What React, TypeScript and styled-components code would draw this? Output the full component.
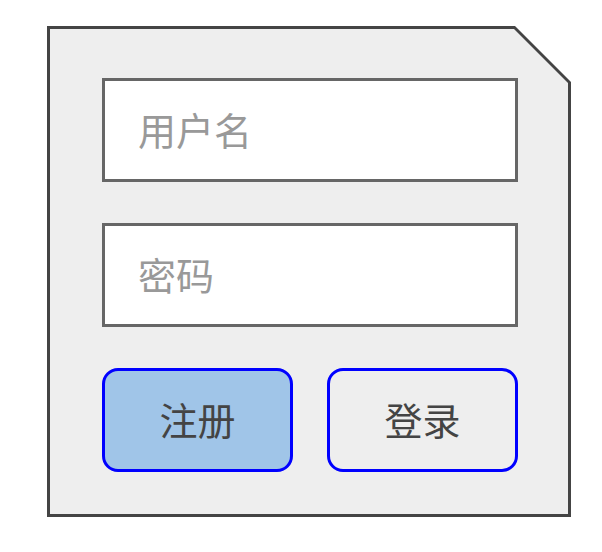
import React from 'react';
import styled, { createGlobalStyle } from 'styled-components';

const GlobalStyle = createGlobalStyle`
  html, body {
    margin: 0;
    padding: 0;
    background: #ffffff;
    font-family: "Noto Sans CJK SC", "Noto Sans", sans-serif;
  }
`;

const Page = styled.div`
  padding: 26px 0 0 47px;
`;

// outer dark shape gives the border, inner light shape sits 3px inside it
const Frame = styled.div`
  width: 524px;
  height: 491px;
  box-sizing: border-box;
  padding: 3px;
  background: #444444;
  clip-path: polygon(0 0, calc(100% - 56px) 0, 100% 56px, 100% 100%, 0 100%);
`;

const Panel = styled.form`
  height: 100%;
  box-sizing: border-box;
  padding: 49px 50px 42px 52px;
  background: #eeeeee;
  clip-path: polygon(0 0, calc(100% - 54px) 0, 100% 54px, 100% 100%, 0 100%);
  display: flex;
  flex-direction: column;
  gap: 41px;
`;

const Field = styled.input`
  width: 416px;
  height: 104px;
  box-sizing: border-box;
  margin: 0;
  padding: 0 0 4px 33px;
  border: 3px solid #666666;
  border-radius: 0;
  background: #ffffff;
  outline: none;
  font-family: "Noto Sans CJK SC", "Noto Sans", sans-serif;
  font-size: 38px;
  color: #444444;

  &::placeholder {
    color: #999999;
  }
`;

const ButtonRow = styled.div`
  display: flex;
  gap: 34px;
`;

const Button = styled.button<{ $primary?: boolean }>`
  width: 191px;
  height: 104px;
  box-sizing: border-box;
  margin: 0;
  padding: 0 0 4px;
  border: 3px solid #0000ff;
  border-radius: 16px;
  background: ${(p) => (p.$primary ? '#a0c5e8' : '#eeeeee')};
  font-family: "Noto Sans CJK SC", "Noto Sans", sans-serif;
  font-size: 38px;
  color: #444444;
  cursor: pointer;
`;

export default function App() {
  return (
    <>
      <GlobalStyle />
      <Page>
        <Frame>
          <Panel onSubmit={(e) => e.preventDefault()}>
            <Field type="text" placeholder="用户名" />
            <Field type="password" placeholder="密码" />
            <ButtonRow>
              <Button type="button" $primary>注册</Button>
              <Button type="submit">登录</Button>
            </ButtonRow>
          </Panel>
        </Frame>
      </Page>
    </>
  );
}
